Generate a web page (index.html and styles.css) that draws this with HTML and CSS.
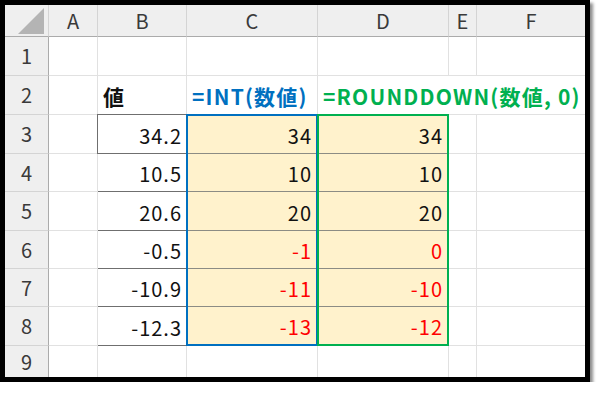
FILE: index.html
```html
<!DOCTYPE html>
<html lang="ja">
<head>
<meta charset="utf-8">
<link rel="stylesheet" href="styles.css">
</head>
<body>
<div class="frame">
  <div class="sheet">
    <div class="corner"><svg width="26" height="26" viewBox="0 0 26 26"><polygon points="26,0 26,26 0,26" fill="#b4b4b4"/></svg></div>
    <div class="ch">A</div><div class="ch">B</div><div class="ch">C</div><div class="ch">D</div><div class="ch">E</div><div class="ch l">F</div>

    <div class="rh">1</div><div class="c"></div><div class="c"></div><div class="c"></div><div class="c"></div><div class="c"></div><div class="c l"></div>

    <div class="rh">2</div><div class="c"></div>
    <div class="c lbl">値</div>
    <div class="c lbl blue">=INT(数値)</div>
    <div class="c lbl green nob">=ROUNDDOWN(数値, 0)</div>
    <div class="c nob"></div><div class="c l"></div>

    <div class="rh">3</div><div class="c edge"></div>
    <div class="blk blk-b">
      <div class="n r1">34.2</div><div class="n r2">10.5</div><div class="n r3">20.6</div><div class="n r4">-0.5</div><div class="n r5">-10.9</div><div class="n r6">-12.3</div>
    </div>
    <div class="blk blk-c">
      <div class="n r1">34</div><div class="n r2">10</div><div class="n r3">20</div><div class="n r4 red">-1</div><div class="n r5 red">-11</div><div class="n r6 red">-13</div>
    </div>
    <div class="blk blk-d">
      <div class="n r1">34</div><div class="n r2">10</div><div class="n r3">20</div><div class="n r4 red">0</div><div class="n r5 red">-10</div><div class="n r6 red">-12</div>
    </div>
    <div class="c"></div><div class="c l"></div>

    <div class="rh">4</div><div class="c edge"></div><div class="c"></div><div class="c l"></div>
    <div class="rh">5</div><div class="c edge"></div><div class="c"></div><div class="c l"></div>
    <div class="rh">6</div><div class="c edge"></div><div class="c"></div><div class="c l"></div>
    <div class="rh">7</div><div class="c edge"></div><div class="c"></div><div class="c l"></div>
    <div class="rh">8</div><div class="c edge"></div><div class="c"></div><div class="c l"></div>

    <div class="rh last">9</div><div class="c last"></div><div class="c last"></div><div class="c last"></div><div class="c last"></div><div class="c last"></div><div class="c l last"></div>
  </div>
</div>
</body>
</html>
```

FILE: styles.css
```css
html, body {
  margin: 0;
  padding: 0;
  background: #ffffff;
}

.frame {
  width: 580px;
  height: 372px;
  border: 5px solid #000000;
  box-shadow: 3px 3px 3px rgba(0, 0, 0, 0.45);
}

.sheet {
  display: grid;
  grid-template-columns: 44px 49px 89px 131px 131px 28px 108px;
  grid-template-rows: 32px 39px 39px 39px 38px 39px 38px 38px 39px 31px;
  height: 100%;
  background: #ffffff;
  font-family: "Noto Sans CJK JP", "Noto Sans", sans-serif;
  font-size: 20px;
  color: #111111;
}

.sheet > div {
  box-sizing: border-box;
}

.corner {
  background: #efefef;
  border-right: 1px solid #d4d4d4;
  border-bottom: 1px solid #ababab;
  display: flex;
  align-items: flex-end;
  justify-content: flex-end;
  padding: 0 4px 2px 0;
}

.corner svg {
  display: block;
}

.ch {
  background: #efefef;
  border-right: 1px solid #d4d4d4;
  border-bottom: 1px solid #ababab;
  display: flex;
  align-items: center;
  justify-content: center;
  color: #3a3a3a;
  font-size: 20px;
  line-height: 1;
}

.rh {
  background: #efefef;
  border-right: 1px solid #ababab;
  border-bottom: 1px solid #d4d4d4;
  display: flex;
  align-items: center;
  justify-content: center;
  color: #3a3a3a;
  font-size: 20px;
  line-height: 1;
}

.c {
  border-right: 1px solid #e1e1e1;
  border-bottom: 1px solid #e1e1e1;
}

.c.l,
.ch.l {
  border-right: none;
}

.c.last,
.rh.last {
  border-bottom: none;
}

.c.nob {
  border-right: none;
}

.lbl {
  display: flex;
  align-items: center;
  padding: 2px 0 0 5px;
  font-size: 21px;
  font-weight: 700;
  letter-spacing: 1.2px;
  white-space: nowrap;
  overflow: visible;
  line-height: 1;
}

.blue {
  color: #0070c0;
}

.green {
  color: #00b050;
}

.blk {
  display: flex;
  flex-direction: column;
  grid-row: span 6;
  margin: -1px 0 0 -1px;
}

.blk-b {
  border: 1px solid #6f6f6f;
}

.blk-c {
  border: 2px solid #0070c0;
  background: #fff2cc;
}

.blk-d {
  border: 2px solid #00b050;
  background: #fff2cc;
}

.n {
  box-sizing: border-box;
  display: flex;
  align-items: center;
  justify-content: flex-end;
  padding: 3px 4px 0 0;
  line-height: 1;
  letter-spacing: 1px;
  flex: none;
}

.blk-b .n {
  border-bottom: 1px solid #6f6f6f;
}

.blk-c .n,
.blk-d .n {
  border-bottom: 1px solid #8c8c84;
}

.blk .n.r6 {
  border-bottom: none;
  flex: 1;
}

.blk-b .r1 { height: 39px; }
.blk-b .r2 { height: 38px; }
.blk-b .r3 { height: 39px; }
.blk-b .r4 { height: 38px; }
.blk-b .r5 { height: 38px; }

.blk-c .r1, .blk-d .r1 { height: 38px; }
.blk-c .r2, .blk-d .r2 { height: 38px; }
.blk-c .r3, .blk-d .r3 { height: 39px; }
.blk-c .r4, .blk-d .r4 { height: 38px; }
.blk-c .r5, .blk-d .r5 { height: 38px; }

.red {
  color: #ff0000;
}
```
